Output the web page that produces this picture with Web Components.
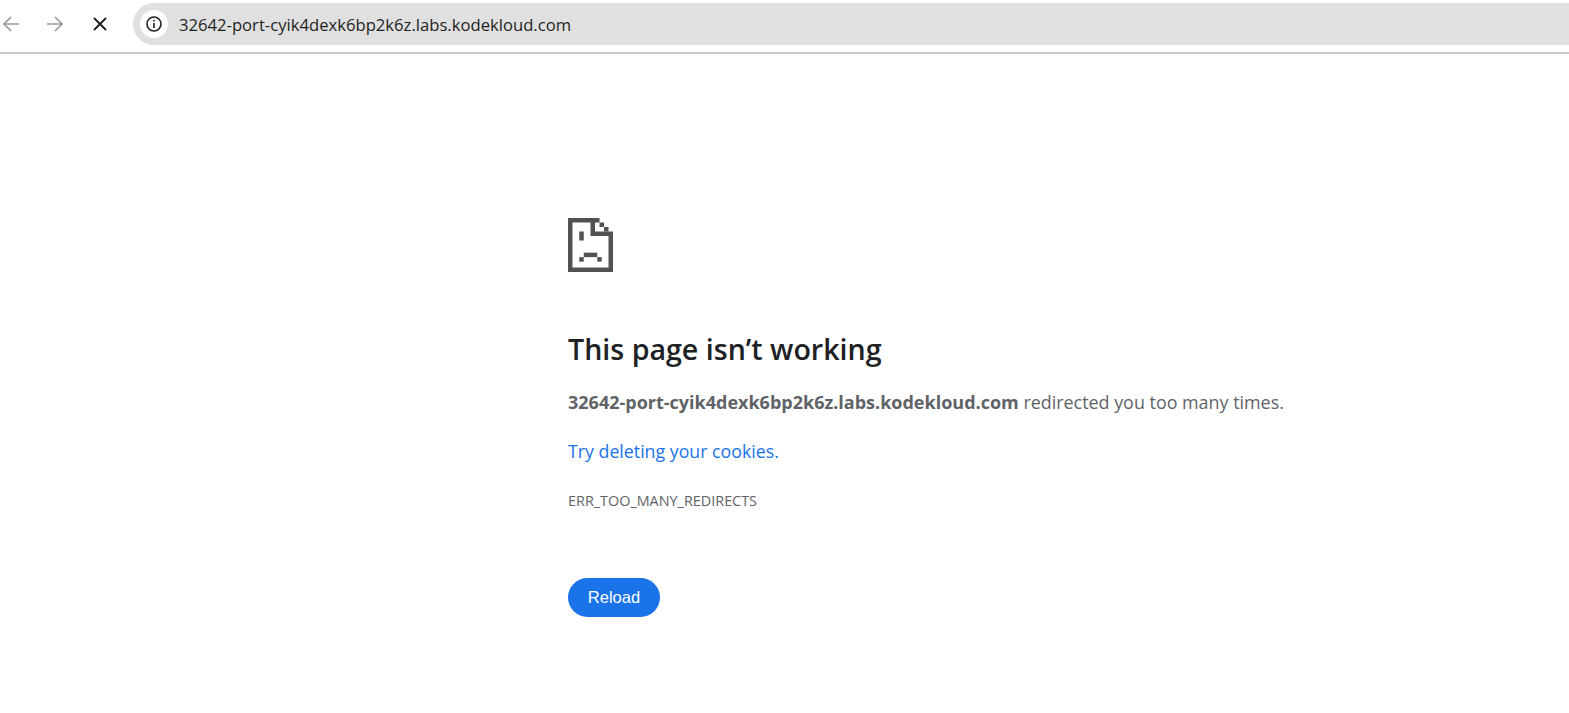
<!DOCTYPE html>
<html>
<head>
<meta charset="utf-8">
<style>
  html, body { margin: 0; background: #fff; }
  body { font-family: "Open Sans", "Liberation Sans", sans-serif; overflow: hidden; }
</style>
</head>
<body>
<browser-toolbar url="32642-port-cyik4dexk6bp2k6z.labs.kodekloud.com"></browser-toolbar>
<error-page>
  <span slot="title">This page isn’t working</span>
  <span slot="host">32642-port-cyik4dexk6bp2k6z.labs.kodekloud.com</span>
  <span slot="message">redirected you too many times.</span>
  <span slot="hint">Try deleting your cookies.</span>
  <span slot="code">ERR_TOO_MANY_REDIRECTS</span>
</error-page>

<script>
class BrowserToolbar extends HTMLElement {
  connectedCallback() {
    this.attachShadow({ mode: 'open' });
    this.shadowRoot.innerHTML = `
      <style>
        :host {
          display: flex;
          align-items: center;
          padding-top: 3px;
          padding-bottom: 7px;
          box-sizing: border-box;
          border-bottom: 2px solid #c9c9c9;
          height: 54px;
        }
        .nav { display: flex; width: 133px; flex: none; align-items: center; }
        .nav svg { display: block; flex: none; }
        .back { margin-left: 2px; }
        .forward { margin-left: 26px; }
        .stop { margin-left: 29px; }
        .omni {
          flex: 1;
          height: 42px;
          background: #e0e0e0;
          border-radius: 21px 0 0 21px;
          display: flex;
          align-items: center;
          padding-left: 7px;
          gap: 11px;
        }
        .info {
          width: 28px;
          height: 28px;
          border-radius: 50%;
          background: #fff;
          display: flex;
          align-items: center;
          justify-content: center;
        }
        .url {
          font-family: "Open Sans", sans-serif;
          font-size: 16.65px;
          color: #1f1f1f;
        }
      </style>
      <div class="nav">
        <svg class="back" width="18" height="18" viewBox="0 0 18 18" fill="none" stroke="#9a9a9a" stroke-width="1.7"><path d="M17 9H2M9 2L2 9l7 7"/></svg>
        <svg class="forward" width="18" height="18" viewBox="0 0 18 18" fill="none" stroke="#9a9a9a" stroke-width="1.7"><path d="M1 9h15M9 2l7 7-7 7"/></svg>
        <svg class="stop" width="14" height="14" viewBox="0 0 14 14" fill="none" stroke="#1f1f1f" stroke-width="1.9"><path d="M1 1l12 12M13 1L1 13"/></svg>
      </div>
      <div class="omni">
        <div class="info">
          <svg width="18" height="18" viewBox="0 0 18 18" fill="none" stroke="#1f1f1f" stroke-width="1.6"><circle cx="9" cy="9" r="7"/><path d="M9 8v5M9 4.8v1.7"/></svg>
        </div>
        <span class="url">${this.getAttribute('url')}</span>
      </div>`;
  }
}

class SadFile extends HTMLElement {
  connectedCallback() {
    this.attachShadow({ mode: 'open' });
    this.shadowRoot.innerHTML = `
      <style>
        :host { display: block; width: 45px; height: 54px; }
        svg { display: block; }
      </style>
      <svg width="45" height="54" viewBox="0 0 10 12" fill="#525252">
        <path d="M0 0h7v1H1v10h8V4H5V0h1v3h4v9H0z"/>
        <rect x="7" y="1" width="1" height="1"/>
        <rect x="8" y="2" width="1" height="1"/>
        <rect x="2.5" y="3" width="1" height="2"/>
        <rect x="3.5" y="7.7" width="3" height="1"/>
        <rect x="2.5" y="8.7" width="1" height="1"/>
        <rect x="6.5" y="8.7" width="1" height="1"/>
      </svg>`;
  }
}

class ReloadButton extends HTMLElement {
  connectedCallback() {
    this.attachShadow({ mode: 'open' });
    this.shadowRoot.innerHTML = `
      <style>
        :host {
          display: inline-flex;
          align-items: center;
          justify-content: center;
          width: 92px;
          height: 39px;
          border-radius: 20px;
          background: #1a73e8;
          color: #fff;
          font: 16.5px "Liberation Sans", Arial, sans-serif;
        }
      </style>
      <slot></slot>`;
  }
}

class ErrorPage extends HTMLElement {
  connectedCallback() {
    this.attachShadow({ mode: 'open' });
    this.shadowRoot.innerHTML = `
      <style>
        :host {
          display: flex;
          flex-direction: column;
          align-items: flex-start;
          padding: 164px 0 0 568px;
          color: #5f6368;
          font-family: "Open Sans", sans-serif;
        }
        h1 {
          margin: 59px 0 0;
          font-size: 28.6px;
          line-height: 36px;
          font-weight: 600;
          color: #202124;
        }
        p { margin: 0; font-size: 17.9px; line-height: 24px; }
        .desc { margin-top: 23px; }
        .desc b { font-weight: 700; font-size: 18px; }
        .hint { margin-top: 25px; font-size: 17.75px; color: #1a73e8; }
        .code { margin-top: 29px; font-size: 14.4px; line-height: 18px; }
        reload-button { margin-top: 68px; }
      </style>
      <sad-file></sad-file>
      <h1><slot name="title"></slot></h1>
      <p class="desc"><b><slot name="host"></slot></b> <slot name="message"></slot></p>
      <p class="hint"><slot name="hint"></slot></p>
      <div class="code"><slot name="code"></slot></div>
      <reload-button>Reload</reload-button>`;
  }
}

customElements.define('browser-toolbar', BrowserToolbar);
customElements.define('sad-file', SadFile);
customElements.define('reload-button', ReloadButton);
customElements.define('error-page', ErrorPage);
</script>
</body>
</html>
